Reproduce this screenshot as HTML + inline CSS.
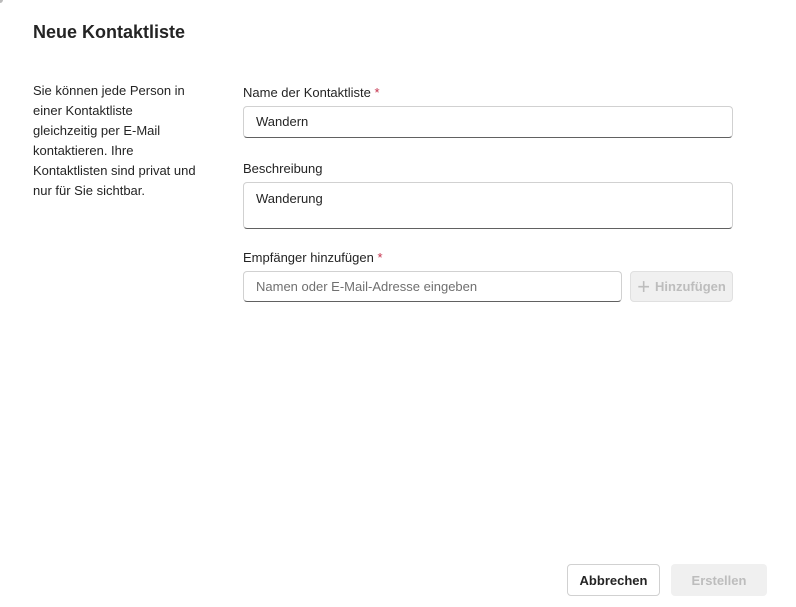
<!DOCTYPE html>
<html><head><meta charset="utf-8"><style>
body{margin:0;width:796px;height:607px;background:#fff;font-family:"Liberation Sans",sans-serif;color:#242424;position:relative;overflow:hidden}
.a{position:absolute}
.t{left:33px;top:22px;font-size:18px;font-weight:bold;color:#242424}
.d{left:33px;top:81px;width:200px;font-size:13px;line-height:20px;white-space:nowrap}
.l{font-size:13px}
.req{color:#c4314b}
.in{border:1px solid #d1d1d1;border-bottom-color:#616161;border-radius:4px;box-sizing:border-box;font-size:13px;padding-left:12px}
.btn{border-radius:4px;box-sizing:border-box;font-size:13px;font-weight:bold;display:flex;align-items:center;justify-content:center}
</style></head><body>
<div class="a" style="left:0;top:0;width:3px;height:3px;background:#bbb;border-bottom-right-radius:3px"></div>
<div class="a t">Neue Kontaktliste</div>
<div class="a d">Sie können jede Person in<br>einer Kontaktliste<br>gleichzeitig per E-Mail<br>kontaktieren. Ihre<br>Kontaktlisten sind privat und<br>nur für Sie sichtbar.</div>
<div class="a l" style="left:243px;top:85px">Name der Kontaktliste <span class="req">*</span></div>
<div class="a in" style="left:243px;top:106px;width:490px;height:32px;line-height:30px">Wandern</div>
<div class="a l" style="left:243px;top:161px">Beschreibung</div>
<div class="a in" style="left:243px;top:182px;width:490px;height:47px;padding-top:8px">Wanderung</div>
<div class="a l" style="left:243px;top:250px">Empfänger hinzufügen <span class="req">*</span></div>
<div class="a in" style="left:243px;top:271px;width:379px;height:31px;line-height:29px;color:#707070">Namen oder E-Mail-Adresse eingeben</div>
<div class="a btn" style="left:630px;top:271px;width:103px;height:31px;background:#f0f0f0;border:1px solid #e0e0e0;color:#bdbdbd"><span style="font-size:22px;font-weight:normal;margin-right:5px;line-height:20px">+</span>Hinzufügen</div>
<div class="a btn" style="left:567px;top:564px;width:93px;height:32px;border:1px solid #d1d1d1;color:#242424">Abbrechen</div>
<div class="a btn" style="left:671px;top:564px;width:96px;height:32px;background:#f0f0f0;color:#bdbdbd">Erstellen</div>
</body></html>
